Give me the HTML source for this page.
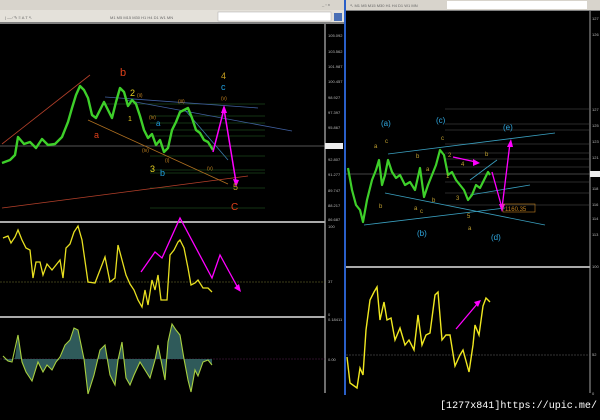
<!DOCTYPE html>
<html><head><style>
body{margin:0;width:600px;height:415px;background:#000;overflow:hidden;font-family:"Liberation Sans",sans-serif}
</style></head><body>
<svg width="600" height="415" viewBox="0 0 600 415" xmlns="http://www.w3.org/2000/svg" font-family="Liberation Sans, sans-serif">
<rect width="600" height="415" fill="#000"/>
<!-- left toolbar -->
<rect x="0" y="0" width="345" height="23" fill="#e4e1da"/>
<rect x="0" y="0" width="345" height="10" fill="#d8d4cc"/>
<rect x="0" y="22" width="345" height="2" fill="#808080"/>
<g font-size="4" fill="#666">
<text x="110" y="19">M1 M5 M15 M30 H1 H4 D1 W1 MN</text>
<text x="5" y="19">|  ―  ⁄  ✎  ≡  A  T  ↖</text>
<text x="322" y="6">_ ▫ x</text>
</g>
<rect x="218" y="12" width="113" height="9" fill="#fff" stroke="#aaa" stroke-width=".5"/>
<rect x="334" y="13" width="8" height="8" fill="#4a6fb5"/>
<!-- right toolbar -->
<rect x="346" y="0" width="254" height="10" fill="#d8d4cc"/>
<rect x="346" y="10" width="254" height="1" fill="#808080"/>
<rect x="447" y="1" width="140" height="8" fill="#fff"/>
<text x="350" y="7" font-size="4" fill="#666">↖ M1 M5 M15 M30 H1 H4 D1 W1 MN</text>
<!-- divider -->
<rect x="344" y="0" width="2" height="395" fill="#2a5fc8"/>
<!-- left axes -->
<line x1="325" y1="24" x2="325" y2="393" stroke="#ddd" stroke-width="1"/>
<g font-size="4" fill="#bbb">
<text x="328" y="37">105.092</text><text x="328" y="53">103.562</text><text x="328" y="68">101.987</text><text x="328" y="83">100.457</text><text x="328" y="99">98.927</text><text x="328" y="114">97.397</text><text x="328" y="129">95.867</text><text x="328" y="161">92.807</text><text x="328" y="176">91.277</text><text x="328" y="192">89.747</text><text x="328" y="207">88.217</text><text x="328" y="221">86.687</text><text x="328" y="228">100</text><text x="328" y="283">37</text><text x="328" y="316">0</text><text x="328" y="321">0.18411</text><text x="328" y="361">0.00</text>
</g>
<rect x="325" y="143" width="18" height="6" fill="#eee"/>
<line x1="0" y1="146" x2="325" y2="146" stroke="#aaa" stroke-width=".6"/>
<line x1="0" y1="222" x2="325" y2="222" stroke="#aaa" stroke-width="2"/>
<line x1="0" y1="317" x2="325" y2="317" stroke="#aaa" stroke-width="2"/>
<!-- left fib levels -->
<g stroke="#2a6a2a" stroke-width=".6">
<line x1="105" y1="104" x2="265" y2="104"/><line x1="150" y1="116" x2="265" y2="116"/><line x1="150" y1="123" x2="265" y2="123"/><line x1="150" y1="130" x2="265" y2="130"/><line x1="150" y1="136" x2="265" y2="136"/><line x1="150" y1="156" x2="265" y2="156"/><line x1="150" y1="170" x2="265" y2="170"/><line x1="150" y1="173" x2="265" y2="173"/><line x1="150" y1="188" x2="265" y2="188"/><line x1="150" y1="208" x2="265" y2="208"/>
</g>
<!-- trendlines left -->
<g stroke-width=".8" fill="none">
<line x1="2" y1="144" x2="90" y2="75" stroke="#b5402a"/>
<line x1="2" y1="208" x2="248" y2="176" stroke="#b5402a"/>
<line x1="88" y1="120" x2="228" y2="184" stroke="#b07020"/>
<line x1="105" y1="97" x2="258" y2="108" stroke="#4060a0"/>
<line x1="125" y1="100" x2="292" y2="131" stroke="#4060a0"/>
<line x1="185" y1="110" x2="228" y2="160" stroke="#3a7aaa"/>
</g>
<!-- left price -->
<polyline fill="none" stroke="#3ecf2a" stroke-width="2.4" stroke-linejoin="round" points="2,163 10,160 15,155 18,137 24,144 30,142 36,148 42,139 48,145 55,144 62,137 68,122 72,108 76,95 80,86 84,90 88,98 92,115 96,118 100,110 104,102 108,110 112,118 116,102 120,88 124,92 128,106 132,100 136,104 140,116 144,130 148,138 152,134 156,145 160,140 164,152 168,148 172,130 176,122 180,112 184,110 188,108 192,118 196,130 200,133 204,140 208,142 213,150"/>
<polyline fill="none" stroke="#ff00ff" stroke-width="1.5" points="213,152 224,109 236,182"/>
<polygon points="224,105 221,113 227,113" fill="#f0f"/><polygon points="236,187 233,179 239,180" fill="#f0f"/>
<g font-size="9">
<text x="120" y="76" fill="#e0401a" font-size="11">b</text>
<text x="94" y="138" fill="#e0401a">a</text>
<text x="231" y="210" fill="#e0401a" font-size="10">C</text>
<text x="130" y="96" fill="#e8d020">2</text>
<text x="128" y="121" fill="#e8d020" font-size="7">1</text>
<text x="150" y="172" fill="#e8d020">3</text>
<text x="221" y="79" fill="#c8a020">4</text>
<text x="233" y="190" fill="#c8a020">5</text>
<text x="160" y="176" fill="#20a0e0">b</text>
<text x="156" y="126" fill="#20a0e0" font-size="8">a</text>
<text x="221" y="90" fill="#20a0e0">c</text>
</g>
<g font-size="5" fill="#c08020"><text x="137" y="97">(ii)</text><text x="149" y="119">(iv)</text><text x="178" y="103">(iii)</text><text x="221" y="100">(v)</text><text x="207" y="170">(v)</text><text x="142" y="152">(iv)</text><text x="165" y="162">(i)</text></g>
<!-- oscillator left -->
<line x1="0" y1="282" x2="325" y2="282" stroke="#7a7a30" stroke-width=".6" stroke-dasharray="2,1"/>
<polyline fill="none" stroke="#e8e020" stroke-width="1.3" points="3,238 8,236 11,243 15,237 18,230 22,240 26,248 30,250 33,278 36,262 40,262 43,275 47,264 52,270 56,265 60,260 63,278 66,248 70,244 74,232 78,226 82,240 88,282 95,283 100,270 105,257 110,282 115,278 118,245 122,260 126,275 130,284 134,290 138,300 142,307 145,290 148,305 152,280 155,290 158,275 161,300 165,300 167,300 170,255 174,250 178,242 180,240 184,248 188,268 191,285 195,283 198,280 203,288 208,288 212,292"/>
<polyline fill="none" stroke="#ff00ff" stroke-width="1.3" points="141,272 155,252 162,258 180,218 212,278 220,255 238,288"/>
<polygon points="241,292 234,288 239,284" fill="#f0f"/>
<!-- histogram -->
<line x1="0" y1="359" x2="325" y2="359" stroke="#5a2050" stroke-width=".6" stroke-dasharray="2,1"/>
<polygon fill="#2f5a5a" points="3,359 10,362 15,358 18,335 22,362 26,372 32,381 38,362 43,372 47,365 52,370 56,362 60,359 65,345 70,340 74,328 78,330 84,359 88,394 94,375 100,350 105,345 110,375 115,385 118,360 122,342 126,378 130,385 134,375 140,362 145,370 150,378 155,360 158,345 161,360 165,380 168,342 172,324 176,330 180,335 184,359 188,380 191,392 195,370 198,376 203,362 208,360 212,365 212,359"/>
<polyline fill="none" stroke="#a8d040" stroke-width="1.1" points="3,356 8,361 12,362 18,335 22,362 26,372 32,381 38,362 43,372 47,365 52,370 56,362 60,357 65,345 70,340 74,328 78,330 84,359 88,394 94,375 100,350 105,345 110,375 115,385 118,360 122,342 126,378 130,385 134,375 140,362 145,370 150,378 155,360 158,345 161,360 165,380 168,342 172,324 176,330 180,335 184,359 188,380 191,392 195,370 198,376 203,362 208,360 212,365"/>
<!-- right axes -->
<line x1="590" y1="11" x2="590" y2="393" stroke="#ccc" stroke-width=".8"/>
<g font-size="4" fill="#bbb"><text x="592" y="20">127</text><text x="592" y="36">126</text><text x="592" y="111">127</text><text x="592" y="127">125</text><text x="592" y="143">123</text><text x="592" y="159">121</text><text x="592" y="190">118</text><text x="592" y="206">116</text><text x="592" y="220">114</text><text x="592" y="236">113</text><text x="592" y="268">100</text><text x="592" y="356">52</text><text x="592" y="395">0</text></g>
<rect x="590" y="171" width="10" height="6" fill="#eee"/>
<line x1="346" y1="174" x2="590" y2="174" stroke="#888" stroke-width=".5"/>
<line x1="346" y1="267" x2="590" y2="267" stroke="#aaa" stroke-width="2"/>
<g stroke="#555" stroke-width=".5"><line x1="445" y1="109" x2="590" y2="109"/><line x1="445" y1="124" x2="590" y2="124"/><line x1="445" y1="130" x2="590" y2="130"/><line x1="445" y1="144" x2="590" y2="144"/><line x1="445" y1="153" x2="590" y2="153"/><line x1="445" y1="159" x2="590" y2="159"/><line x1="445" y1="167" x2="590" y2="167"/><line x1="445" y1="182" x2="590" y2="182"/><line x1="445" y1="193" x2="590" y2="193"/><line x1="445" y1="205" x2="590" y2="205"/></g>
<g stroke="#3aa0c0" stroke-width=".8" fill="none">
<line x1="388" y1="154" x2="555" y2="133"/><line x1="385" y1="193" x2="545" y2="225"/><line x1="364" y1="225" x2="505" y2="208"/><line x1="470" y1="195" x2="530" y2="185"/><line x1="470" y1="180" x2="497" y2="160"/>
</g>
<polyline fill="none" stroke="#3ecf2a" stroke-width="2.2" stroke-linejoin="round" points="348,168 352,190 356,205 360,210 363,222 367,200 372,180 376,170 379,160 382,185 385,175 388,160 392,172 396,178 400,175 405,185 410,182 415,190 420,168 424,197 428,185 432,175 436,165 440,150 444,155 448,175 452,172 456,180 460,185 464,190 468,200 472,195 476,185 480,188 484,180 488,172 490,175"/>
<polyline fill="none" stroke="#ff00ff" stroke-width="1.3" points="492,172 502,208 510,143"/>
<polygon points="511,139 507,147 513,147" fill="#f0f"/><polygon points="502,212 499,204 505,204" fill="#f0f"/>
<line x1="453" y1="157" x2="476" y2="162" stroke="#f0f" stroke-width="1.3"/><polygon points="480,163 473,159 473,166" fill="#f0f"/>
<rect x="503" y="204" width="32" height="8" fill="none" stroke="#c08020" stroke-width=".6"/>
<text x="505" y="211" font-size="6" fill="#c08020">1160.35</text>
<g font-size="8" fill="#30a8e0"><text x="381" y="126">(a)</text><text x="436" y="123">(c)</text><text x="503" y="130">(e)</text><text x="417" y="236">(b)</text><text x="491" y="240">(d)</text></g>
<g font-size="6" fill="#c0a030"><text x="374" y="148">a</text><text x="385" y="143">c</text><text x="416" y="158">b</text><text x="426" y="171">a</text><text x="441" y="140">c</text><text x="448" y="157">2</text><text x="461" y="166">4</text><text x="485" y="156">b</text><text x="446" y="178">1</text><text x="456" y="200">3</text><text x="467" y="218">5</text><text x="468" y="230">a</text><text x="414" y="210">a</text><text x="420" y="213">c</text><text x="432" y="202">b</text><text x="379" y="208">b</text></g>
<!-- right osc -->
<line x1="346" y1="355" x2="590" y2="355" stroke="#666" stroke-width=".5" stroke-dasharray="2,1"/>
<polyline fill="none" stroke="#f0e820" stroke-width="1.4" points="347,357 350,383 357,388 360,368 363,375 366,330 370,300 374,292 377,287 380,320 384,302 387,320 391,318 395,340 400,328 405,345 409,340 414,350 418,315 422,345 426,335 430,333 435,295 438,292 442,340 446,335 450,335 455,366 460,355 463,350 469,372 473,345 475,325 479,335 483,306 486,298 490,302"/>
<line x1="456" y1="329" x2="478" y2="303" stroke="#f0f" stroke-width="1.3"/><polygon points="481,300 474,302 478,307" fill="#f0f"/>
<text x="440" y="408" font-size="10" fill="#fff" font-family="Liberation Mono, monospace" textLength="157" lengthAdjust="spacingAndGlyphs">[1277x841]https://upic.me/</text>
</svg>
</body></html>
